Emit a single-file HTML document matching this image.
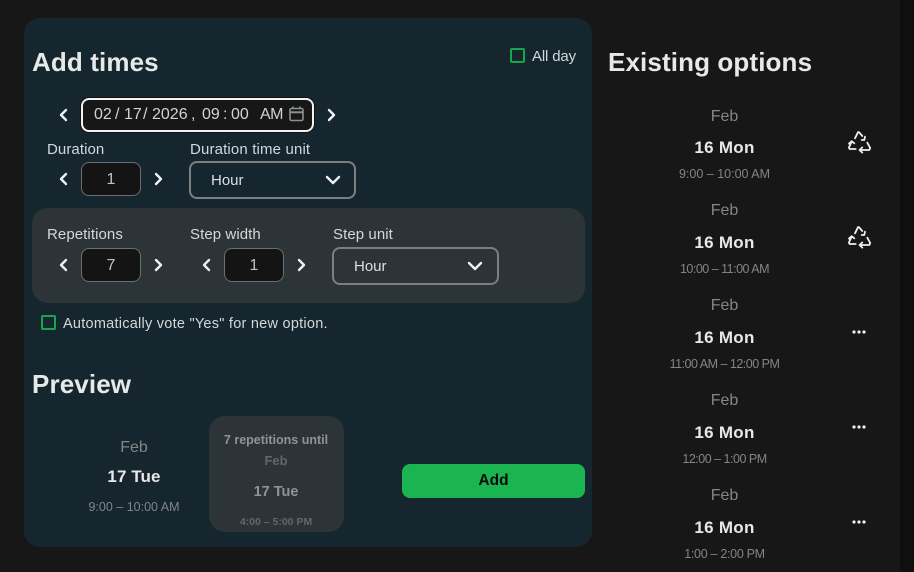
<!DOCTYPE html>
<html><head><meta charset="utf-8"><style>
html,body{margin:0;padding:0;background:#171717;width:914px;height:572px;overflow:hidden}
body{position:relative;font-family:"Liberation Sans",sans-serif;color:#e4e6e6}
.a,.c{position:absolute;white-space:nowrap;line-height:20px}
.c{transform:translateX(-50%)}
.b{position:absolute;box-sizing:border-box}
h2{position:absolute;margin:0;font-size:26px;font-weight:700;line-height:30px;color:#e6e9e9;white-space:nowrap;letter-spacing:.12px}
.l{font-size:15px;color:#d3d8d8;letter-spacing:.08px}
.num{position:absolute;box-sizing:border-box;width:60px;height:34px;background:#141414;border:1px solid #6a6f70;border-radius:8px;text-align:center;line-height:34px;font-size:16px;color:#c0c3c3}
.sel{position:absolute;box-sizing:border-box;height:38px;border:2px solid #7b7f80;border-radius:8px;font-size:15px;line-height:36px;padding-left:20px;color:#dcdfdf}
svg{position:absolute;overflow:visible}
.ch{fill:none;stroke:#f0f0f0;stroke-width:2.4;stroke-linecap:round;stroke-linejoin:round}
.feb{font-size:16px;color:#858787}
.day{font-size:17px;font-weight:700;color:#e8e8e8;letter-spacing:.3px}
.tm{font-size:12.5px;color:#838585}
.cb{position:absolute;box-sizing:border-box;width:15px;height:15px;border:2px solid #18a64c;border-radius:2px}
.dt{position:absolute;top:105px;font-size:16px;line-height:20px;color:#d2d4d4;white-space:nowrap}
</style></head><body>
<div class="b" style="left:900px;top:0;width:14px;height:572px;background:#0f0f0f"></div>
<div class="b" style="left:24px;top:18px;width:568px;height:529px;background:#15262e;border-radius:16px"></div>

<h2 style="left:32px;top:47px">Add times</h2>
<div class="cb" style="left:510px;top:48px"></div>
<div class="a l" style="left:532px;top:47px;letter-spacing:-.15px">All day</div>

<svg style="left:58px;top:108px" width="10" height="14"><path class="ch" d="M8 2L3 7L8 12"/></svg>
<div class="b" style="left:81px;top:98px;width:233px;height:34px;background:#171717;border:2px solid #f2f2f2;border-radius:8px;box-shadow:0 0 0 1px #111"></div>
<span class="dt" style="left:94px">02</span><span class="dt" style="left:115px">/</span><span class="dt" style="left:124px">17</span><span class="dt" style="left:143px">/</span><span class="dt" style="left:152px">2026</span><span class="dt" style="left:191px">,</span><span class="dt" style="left:202px">09</span><span class="dt" style="left:223px">:</span><span class="dt" style="left:231px">00</span><span class="dt" style="left:260px;letter-spacing:-.6px">AM</span>
<svg style="left:289px;top:106px" width="15" height="16" fill="none" stroke="#8d8f8f" stroke-width="1.6"><rect x="1" y="2.5" width="13" height="12" rx="1.5"/><path d="M1 6.3H14" stroke-width="2"/><path d="M4 0.5V3M11 0.5V3"/></svg>
<svg style="left:327px;top:108px" width="10" height="14"><path class="ch" d="M2 2L7 7L2 12"/></svg>

<div class="a l" style="left:47px;top:140px">Duration</div>
<div class="a l" style="left:190px;top:140px;letter-spacing:.15px">Duration time unit</div>
<svg style="left:58px;top:172px" width="10" height="14"><path class="ch" d="M8 2L3 7L8 12"/></svg>
<div class="num" style="left:81px;top:162px">1</div>
<svg style="left:154px;top:172px" width="10" height="14"><path class="ch" d="M2 2L7 7L2 12"/></svg>
<div class="sel" style="left:189px;top:161px;width:167px">Hour</div>
<svg style="left:325px;top:175px" width="16" height="10"><path class="ch" d="M2 2L8 8L14 2"/></svg>

<div class="b" style="left:32px;top:208px;width:553px;height:95px;background:#2c3437;border-radius:16px"></div>
<div class="a l" style="left:47px;top:225px">Repetitions</div>
<div class="a l" style="left:190px;top:225px">Step width</div>
<div class="a l" style="left:333px;top:225px">Step unit</div>
<svg style="left:58px;top:258px" width="10" height="14"><path class="ch" d="M8 2L3 7L8 12"/></svg>
<div class="num" style="left:81px;top:248px">7</div>
<svg style="left:154px;top:258px" width="10" height="14"><path class="ch" d="M2 2L7 7L2 12"/></svg>
<svg style="left:201px;top:258px" width="10" height="14"><path class="ch" d="M8 2L3 7L8 12"/></svg>
<div class="num" style="left:224px;top:248px">1</div>
<svg style="left:297px;top:258px" width="10" height="14"><path class="ch" d="M2 2L7 7L2 12"/></svg>
<div class="sel" style="left:332px;top:247px;width:167px">Hour</div>
<svg style="left:467px;top:261px" width="16" height="10"><path class="ch" d="M2 2L8 8L14 2"/></svg>

<div class="cb" style="left:41px;top:315px"></div>
<div class="a l" style="left:63px;top:314px;font-size:14.5px;letter-spacing:.25px">Automatically vote "Yes" for new option.</div>

<h2 style="left:32px;top:369px">Preview</h2>
<div class="c feb" style="left:134px;top:438px">Feb</div>
<div class="c day" style="left:134px;top:467px;letter-spacing:.1px">17 Tue</div>
<div class="c tm" style="left:134px;top:497px">9:00 – 10:00 AM</div>

<div class="b" style="left:209px;top:416px;width:135px;height:116px;background:#2c3437;border-radius:16px"></div>
<div class="c" style="left:276px;top:430px;font-size:12.5px;font-weight:700;color:#8f9495">7 repetitions until</div>
<div class="c" style="left:276px;top:451px;font-size:13px;font-weight:700;color:#626869">Feb</div>
<div class="c" style="left:276px;top:482px;font-size:14.5px;font-weight:700;color:#8f9495">17 Tue</div>
<div class="c" style="left:276px;top:512px;font-size:10.5px;font-weight:700;color:#626869">4:00 – 5:00 PM</div>

<div class="b" style="left:402px;top:464px;width:183px;height:34px;background:#1ab550;border-radius:8px;text-align:center;line-height:34px;font-size:15.5px;font-weight:700;color:#0b0b0b">Add</div>

<h2 style="left:608px;top:47px">Existing options</h2>

<div class="c feb" style="left:724.5px;top:107px">Feb</div>
<div class="c day" style="left:724.5px;top:138px">16 Mon</div>
<div class="c tm" style="left:724.5px;top:164px">9:00 – 10:00 AM</div>
<div class="c feb" style="left:724.5px;top:201px">Feb</div>
<div class="c day" style="left:724.5px;top:233px">16 Mon</div>
<div class="c tm" style="left:724.5px;top:259px;letter-spacing:-.5px">10:00 – 11:00 AM</div>
<div class="c feb" style="left:724.5px;top:296px">Feb</div>
<div class="c day" style="left:724.5px;top:328px">16 Mon</div>
<div class="c tm" style="left:724.5px;top:354px;letter-spacing:-.5px">11:00 AM – 12:00 PM</div>
<div class="c feb" style="left:724.5px;top:391px">Feb</div>
<div class="c day" style="left:724.5px;top:423px">16 Mon</div>
<div class="c tm" style="left:724.5px;top:449px;letter-spacing:-.5px">12:00 – 1:00 PM</div>
<div class="c feb" style="left:724.5px;top:486px">Feb</div>
<div class="c day" style="left:724.5px;top:518px">16 Mon</div>
<div class="c tm" style="left:724.5px;top:544px;letter-spacing:-.3px">1:00 – 2:00 PM</div>

<svg style="left:848px;top:131px" width="23" height="23" fill="none" stroke="#f0f0f0" stroke-width="1.8" stroke-linejoin="round" stroke-linecap="round"><path d="M7 7.3L10 1.2H11L14.3 5M13.7 9H16.3L17 5.7"/><path d="M3.7 10.5L0.9 16.6L1.6 18H7.7M1 12.6L3.7 10.2L6.3 12.3"/><path d="M19.3 11.7L22.2 17L21.3 19H12M14.3 16.4L11.5 19L14.3 21.6"/></svg>
<svg style="left:848px;top:226px" width="23" height="23" fill="none" stroke="#f0f0f0" stroke-width="1.8" stroke-linejoin="round" stroke-linecap="round"><path d="M7 7.3L10 1.2H11L14.3 5M13.7 9H16.3L17 5.7"/><path d="M3.7 10.5L0.9 16.6L1.6 18H7.7M1 12.6L3.7 10.2L6.3 12.3"/><path d="M19.3 11.7L22.2 17L21.3 19H12M14.3 16.4L11.5 19L14.3 21.6"/></svg>
<svg style="left:852px;top:329px" width="14" height="6" fill="#f0f0f0"><circle cx="2" cy="3" r="1.6"/><circle cx="7" cy="3" r="1.6"/><circle cx="12" cy="3" r="1.6"/></svg>
<svg style="left:852px;top:424px" width="14" height="6" fill="#f0f0f0"><circle cx="2" cy="3" r="1.6"/><circle cx="7" cy="3" r="1.6"/><circle cx="12" cy="3" r="1.6"/></svg>
<svg style="left:852px;top:519px" width="14" height="6" fill="#f0f0f0"><circle cx="2" cy="3" r="1.6"/><circle cx="7" cy="3" r="1.6"/><circle cx="12" cy="3" r="1.6"/></svg>
</body></html>
